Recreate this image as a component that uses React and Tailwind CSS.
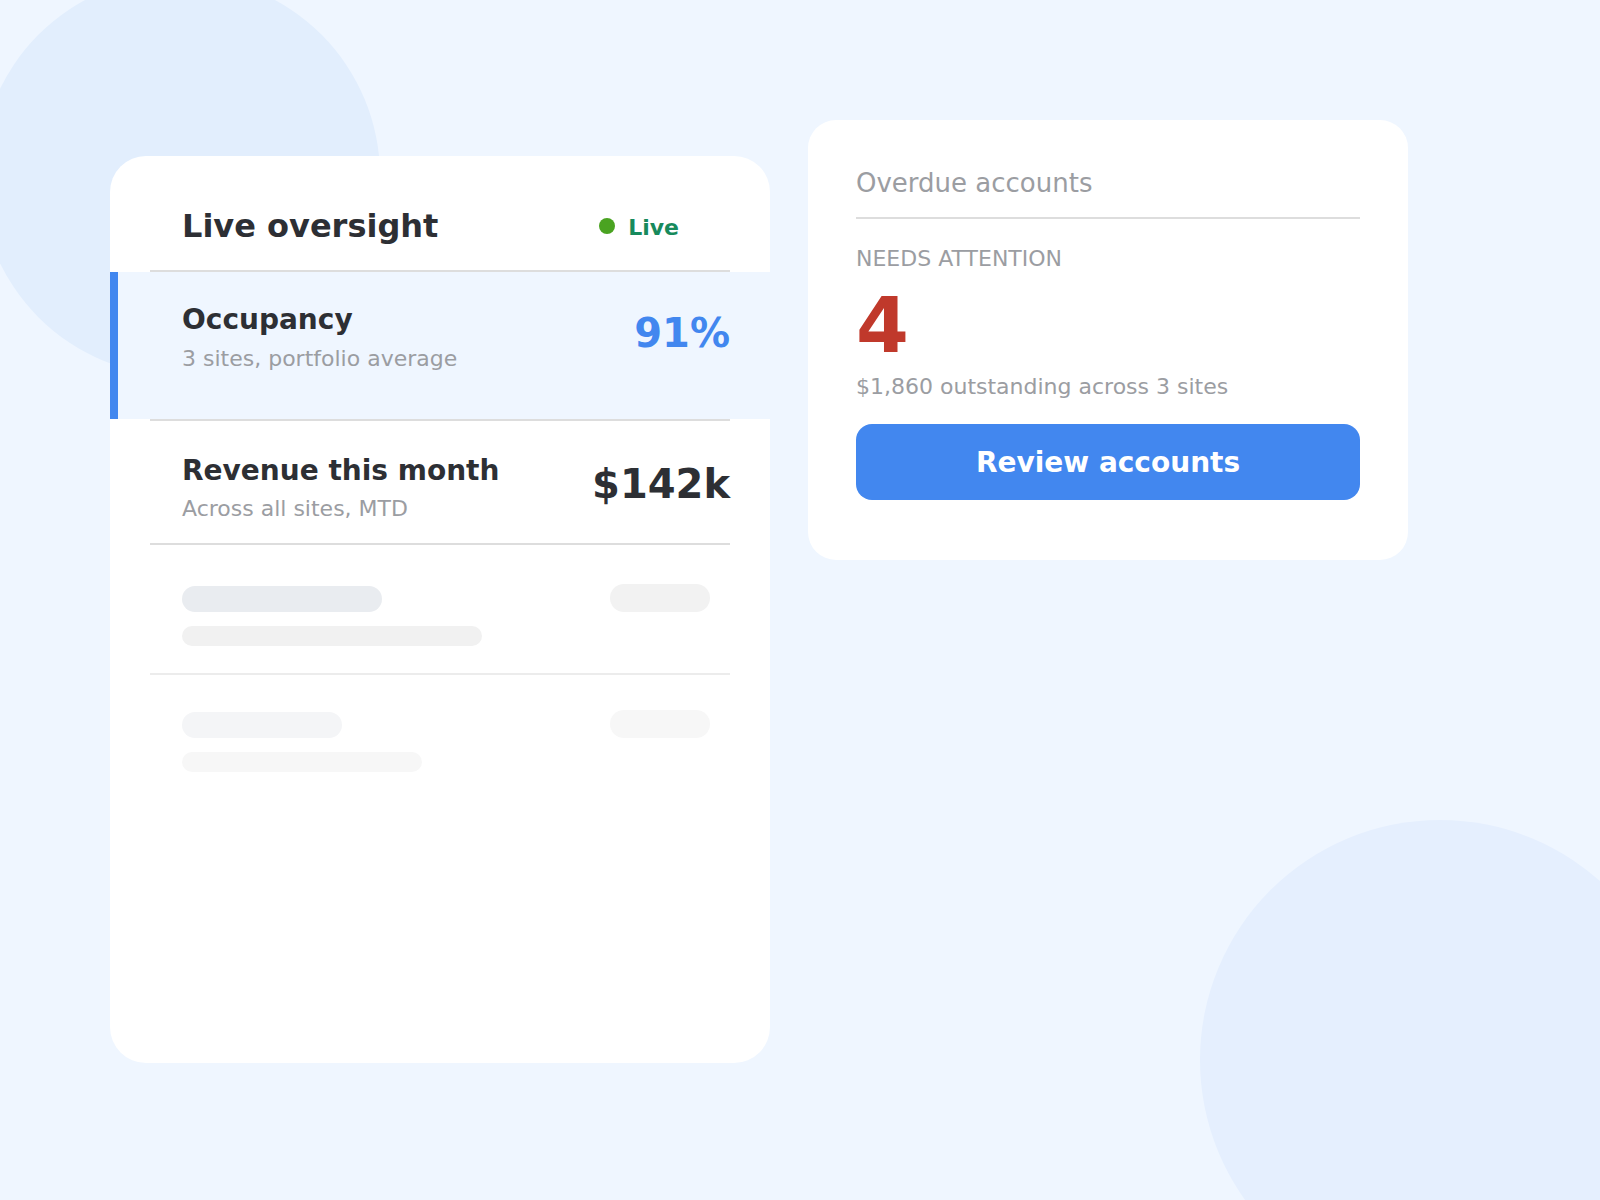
export default function App() {
  return (
    <div className="relative min-h-[1200px] w-full overflow-hidden bg-[#eff6ff] font-['DejaVu_Sans',sans-serif]">
      <div className="absolute left-[-20px] top-[-24px] h-[400px] w-[400px] rounded-full bg-[#e2eefd]" />
      <div className="absolute left-[1200px] top-[820px] h-[480px] w-[480px] rounded-full bg-[#e5effe]" />

      <div className="relative flex items-start gap-[38px] pl-[110px] pt-[120px]">
        {/* Left card */}
        <div className="mt-[36px] h-[907px] w-[660px] shrink-0 overflow-hidden rounded-[36px] bg-white">
          <div className="flex items-center justify-between pb-[25px] pl-[72px] pr-[91px] pt-[51px]">
            <h2 className="text-[32px] font-bold leading-[normal] text-[#2d2f34]">Live oversight</h2>
            <div className="flex items-center gap-[13px]">
              <span className="h-4 w-4 rounded-full bg-[#4aa321]" />
              <span className="mt-[3px] text-[22px] font-bold leading-[normal] text-[#178a5c]">Live</span>
            </div>
          </div>
          <div className="mx-[40px] h-[2px] bg-[#dddddd]" />

          <div className="flex items-start justify-between border-l-[8px] border-[#4287ef] bg-[#eff6ff] pb-[48px] pl-[64px] pr-[40px] pt-[31px]">
            <div>
              <div className="text-[28px] font-bold leading-[normal] text-[#2d2f34]">Occupancy</div>
              <div className="mt-[10px] text-[22px] leading-[normal] text-[#9b9da2]">3 sites, portfolio average</div>
            </div>
            <div className="mt-[7px] text-[40px] font-bold leading-[normal] text-[#4287ef]">91%</div>
          </div>
          <div className="mx-[40px] h-[2px] bg-[#dddddd]" />

          <div className="flex items-start justify-between pb-[22px] pl-[72px] pr-[40px] pt-[33px]">
            <div>
              <div className="text-[28px] font-bold leading-[normal] text-[#2d2f34]">Revenue this month</div>
              <div className="mt-[9px] text-[22px] leading-[normal] text-[#9b9da2]">Across all sites, MTD</div>
            </div>
            <div className="mt-[7px] text-[40px] font-bold leading-[normal] text-[#2d2f34]">$142k</div>
          </div>
          <div className="mx-[40px] h-[2px] bg-[#dddddd]" />

          <div className="flex items-start justify-between pb-[27px] pl-[72px] pr-[60px] pt-[41px]">
            <div className="flex flex-col gap-[14px]">
              <div className="h-[26px] w-[200px] rounded-full bg-[#e9ecf0]" />
              <div className="h-[20px] w-[300px] rounded-full bg-[#f1f1f1]" />
            </div>
            <div className="mt-[-2px] h-[28px] w-[100px] rounded-full bg-[#f2f2f2]" />
          </div>
          <div className="mx-[40px] h-[2px] bg-[#ececec]" />

          <div className="flex items-start justify-between pl-[72px] pr-[60px] pt-[37px]">
            <div className="flex flex-col gap-[14px]">
              <div className="h-[26px] w-[160px] rounded-full bg-[#f4f5f7]" />
              <div className="h-[20px] w-[240px] rounded-full bg-[#f7f7f7]" />
            </div>
            <div className="mt-[-2px] h-[28px] w-[100px] rounded-full bg-[#f7f7f7]" />
          </div>
        </div>

        {/* Right card */}
        <div className="h-[440px] w-[600px] shrink-0 rounded-[28px] bg-white px-[48px] pt-[48px]">
          <div className="border-b-2 border-[#dddddd] pb-[19px] text-[26px] leading-[normal] text-[#9b9da2]">
            Overdue accounts
          </div>
          <div className="mt-[27px] text-[22px] leading-[normal] text-[#9b9da2]">NEEDS ATTENTION</div>
          <div className="mt-[17px] text-[76px] font-bold leading-none text-[#c0392b]">4</div>
          <div className="mt-[10px] text-[22px] leading-[normal] text-[#9b9da2]">$1,860 outstanding across 3 sites</div>
          <button className="mt-[25px] flex h-[76px] w-full items-center justify-center rounded-[16px] bg-[#4287ef] text-[28px] font-bold leading-[normal] text-white">
            Review accounts
          </button>
        </div>
      </div>
    </div>
  );
}
